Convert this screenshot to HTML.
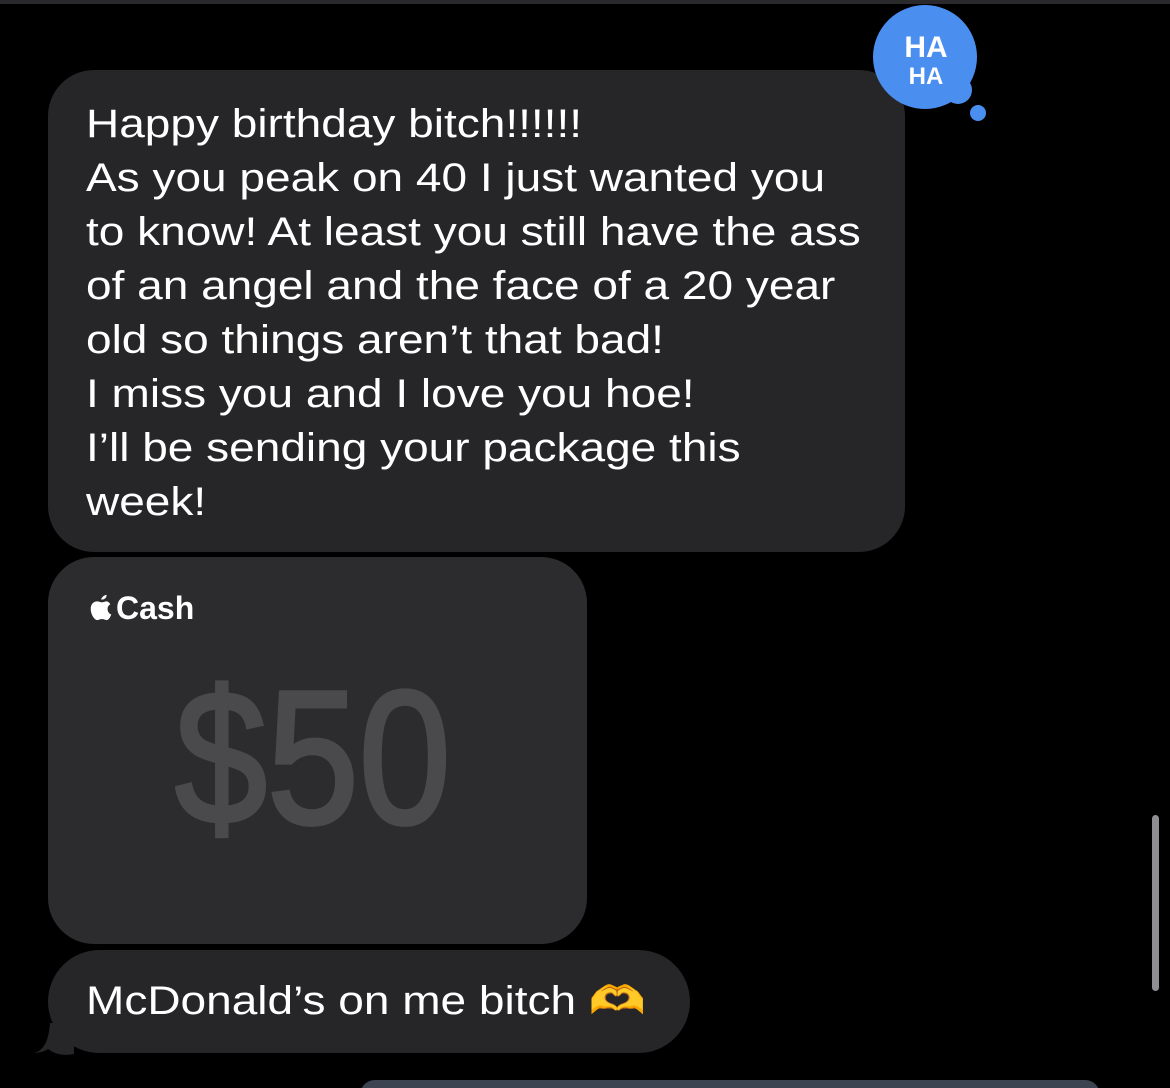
<!DOCTYPE html>
<html><head><meta charset="utf-8"><style>
html,body{margin:0;padding:0;background:#000;width:1170px;height:1088px;overflow:hidden;position:relative;font-family:"Liberation Sans",sans-serif;color:#fff}
.top{position:absolute;left:0;top:0;width:1170px;height:4px;background:#2a2a2c}
.b{position:absolute;background:#262628;border-radius:46px}
.t{position:absolute;left:86px;font-size:40px;line-height:54px;white-space:nowrap;transform:scaleX(1.15);transform-origin:left top}
.sb{position:absolute;left:1152px;top:815px;width:7px;height:176px;border-radius:4px;background:#8e8e93}
</style></head><body>
<div class="top"></div>
<div class="b" style="left:48px;top:70px;width:857px;height:482px"></div>
<div class="t" style="top:97px">Happy birthday bitch!!!!!!<br>As you peak on 40 I just wanted you<br>to know! At least you still have the ass<br>of an angel and the face of a 20 year<br>old so things aren’t that bad!<br>I miss you and I love you hoe!<br>I’ll be sending your package this<br>week!</div>
<div class="b" style="left:48px;top:557px;width:539px;height:387px;background:#2c2c2e"></div>
<svg style="position:absolute;left:88px;top:593px" width="26" height="28" viewBox="0 0 26 30"><path d="M13 7c1-3 4-5 6-5 0 3-2 5-5 5zM19 9c-2 0-3 1-5 1s-3-1-5-1c-4 0-7 3-7 8 0 6 4 12 7 12 2 0 2-1 5-1s3 1 5 1c2 0 4-3 5-6-3-1-4-4-4-6s1-4 3-5c-1-2-3-3-4-3z" fill="#fff"/></svg>
<div style="position:absolute;left:116px;top:588px;font-size:32px;font-weight:bold;line-height:40px">Cash</div>
<div style="position:absolute;left:175px;top:663px;font-size:190px;line-height:190px;color:#4a4a4c;-webkit-text-stroke:4px #4a4a4c;transform:scaleX(0.87);transform-origin:left top">$50</div>
<svg style="position:absolute;left:30px;top:1005px" width="60" height="50"><path d="M3 48Q18 46 20 18L44 18L44 49Q28 52 18 44Q12 48 3 48Z" fill="#262628"/></svg>
<div class="b" style="left:48px;top:950px;width:642px;height:103px;border-radius:52px"></div>
<div class="t" style="top:974px">McDonald’s on me bitch <span style="color:#c48a60">🫶</span></div>
<svg style="position:absolute;left:868px;top:4px" width="124" height="122" viewBox="0 0 124 122"><circle cx="57" cy="53" r="52" fill="#4a8ff0"/><circle cx="90" cy="86" r="14" fill="#4a8ff0"/><circle cx="110" cy="109" r="8" fill="#4a8ff0"/><text x="58" y="53" font-family="Liberation Sans" font-weight="bold" font-size="30" fill="#fff" text-anchor="middle">HA</text><text x="58" y="80" font-family="Liberation Sans" font-weight="bold" font-size="24" fill="#fff" text-anchor="middle">HA</text></svg>
<div class="sb"></div>
<div style="position:absolute;left:360px;top:1080px;width:740px;height:30px;border-radius:22px;background:#3b4450"></div>
</body></html>
